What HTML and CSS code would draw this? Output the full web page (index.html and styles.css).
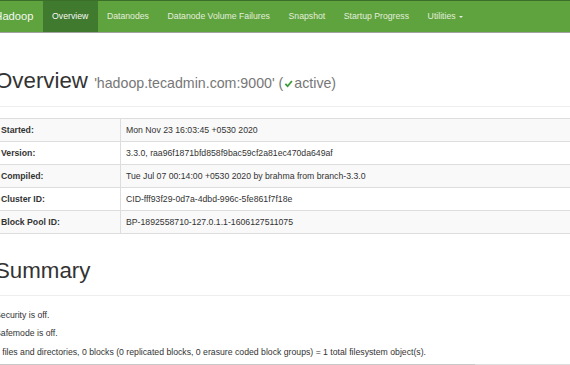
FILE: index.html
```html
<!DOCTYPE html>
<html>
  <head>
    <meta charset="utf-8">
    <title>Namenode information</title>
    <link rel="stylesheet" href="styles.css">
  </head>
  <body>
    <!-- 顶部导航 -->
    <header class="navbar">
      <div class="navbar-inner">
        <a class="brand" href="#">Hadoop</a>
        <ul class="nav">
          <li class="active"><a href="#">Overview</a></li>
          <li><a href="#">Datanodes</a></li>
          <li><a href="#">Datanode Volume Failures</a></li>
          <li><a href="#">Snapshot</a></li>
          <li><a href="#">Startup Progress</a></li>
          <li><a href="#">Utilities <span class="caret"></span></a></li>
        </ul>
      </div>
    </header>

    <div class="container">
      <!-- 概览 -->
      <div class="page-header">
        <h1>Overview <small>'hadoop.tecadmin.com:9000' (<svg class="ok" viewBox="0 0 10 10"><path d="M1.5 5.5 L4 8 L8.8 2.2" /></svg>active)</small></h1>
      </div>
      <table class="table">
        <tr><th>Started:</th><td>Mon Nov 23 16:03:45 +0530 2020</td></tr>
        <tr><th>Version:</th><td>3.3.0, raa96f1871bfd858f9bac59cf2a81ec470da649af</td></tr>
        <tr><th>Compiled:</th><td>Tue Jul 07 00:14:00 +0530 2020 by brahma from branch-3.3.0</td></tr>
        <tr><th>Cluster ID:</th><td>CID-fff93f29-0d7a-4dbd-996c-5fe861f7f18e</td></tr>
        <tr><th>Block Pool ID:</th><td>BP-1892558710-127.0.1.1-1606127511075</td></tr>
      </table>

      <!-- 摘要 -->
      <div class="page-header">
        <h1>Summary</h1>
      </div>
      <p>Security is off.</p>
      <p>Safemode is off.</p>
      <p>1 files and directories, 0 blocks (0 replicated blocks, 0 erasure coded block groups) = 1 total filesystem object(s).</p>
      <div class="usage"><div class="usage-used"></div></div>
    </div>
  </body>
</html>
```

FILE: styles.css
```css
/* -------- 基础 ------------- */
body {
  margin: 0;
  font-family: "Liberation Sans", Arial, sans-serif;
  font-size: 8.7px;
  line-height: 12.4px;
  color: #333;
  background: #fff;
  overflow: hidden;
}
a { text-decoration: none; }

/* -------- 导航栏 ------------- */
.navbar {
  box-sizing: border-box;
  height: 33px;
  background: #5fa33e;
  border-top: 1px solid #3b6e28;
  border-bottom: 1px solid #a2a2a2;
}
.navbar-inner {
  display: flex;
  margin-left: -15px;
}
.brand {
  padding: 9.3px 9.3px;
  font-size: 11.2px;
  line-height: 12.4px;
  color: #f4f8f1;
}
.nav {
  display: flex;
  margin: 0;
  padding: 0;
  list-style: none;
}
.nav a {
  display: block;
  padding: 9.3px 9.3px;
  color: #e3eedc;
}
.nav .active a {
  background: #3f7a2e;
  color: #f6f9f4;
}
.caret {
  display: inline-block;
  width: 0;
  height: 0;
  margin-left: 1px;
  vertical-align: middle;
  border-top: 2.5px solid;
  border-right: 2.5px solid transparent;
  border-left: 2.5px solid transparent;
}

/* -------- 内容 ------------- */
.container {
  margin-left: -5px;
  margin-right: -10px;
}
.page-header {
  margin: 33px 0 12.4px;
  padding-bottom: 5.6px;
  border-bottom: 1px solid #eee;
}
.page-header h1 {
  margin: 0 0 6.2px;
  font-size: 22.3px;
  font-weight: normal;
  line-height: 24.5px;
  color: #333;
}
/* 第一个标题稍微靠下 */
.container > .page-header:first-child {
  margin: 36px 0 11.5px;
}
.container > .page-header:first-child h1 {
  margin-bottom: 4.5px;
}
.page-header h1 small {
  font-size: 14.2px;
  color: #777;
}
.ok {
  width: 9px;
  height: 9px;
  margin: 0 1px;
  vertical-align: 0;
  fill: none;
  stroke: #3c9a3c;
  stroke-width: 2;
}

.table {
  width: 100%;
  margin-bottom: 12.4px;
  border-collapse: collapse;
}
.table th,
.table td {
  padding: 5px 5px;
  line-height: 12px;
  text-align: left;
  border: 1px solid #ddd;
}
.table th {
  width: 114px;
  font-weight: bold;
}
.table tr:nth-child(odd) {
  background: #f9f9f9;
}
/* 摘要标题与上方表格的间距 */
.table + .page-header {
  margin-top: 24.8px;
}

p {
  margin: 0 0 6.2px;
}

.usage {
  height: 3px;
  border-top: 1px solid #ddd;
  background: #f9f9f9;
}
.usage-used {
  width: 480px;
  height: 1px;
  margin-top: -1px;
  background: #c8c8c8;
}
```
